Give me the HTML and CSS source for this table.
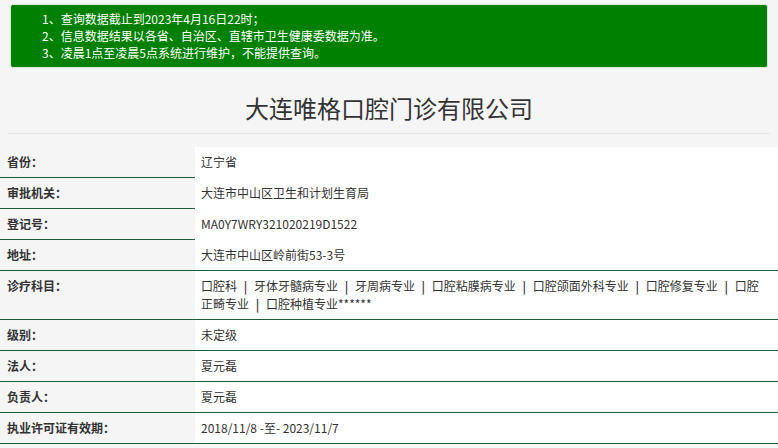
FILE: index.html
```html
<!DOCTYPE html>
<html lang="zh-CN">
<head>
<meta charset="utf-8">
<title>大连唯格口腔门诊有限公司</title>
<link rel="stylesheet" href="styles.css">
</head>
<body>
<div class="notice">
  <p>1、查询数据截止到2023年4月16日22时；</p>
  <p>2、信息数据结果以各省、自治区、直辖市卫生健康委数据为准。</p>
  <p>3、凌晨1点至凌晨5点系统进行维护，不能提供查询。</p>
</div>
<h1 class="title">大连唯格口腔门诊有限公司</h1>
<div class="info">
  <div class="row half"><div class="label">省份：</div><div class="value">辽宁省</div></div>
  <div class="row half"><div class="label">审批机关：</div><div class="value">大连市中山区卫生和计划生育局</div></div>
  <div class="row half"><div class="label">登记号：</div><div class="value">MA0Y7WRY321020219D1522</div></div>
  <div class="row"><div class="label">地址：</div><div class="value">大连市中山区岭前街53-3号</div></div>
  <div class="row"><div class="label">诊疗科目：</div><div class="value">口腔科 <span class="sep">|</span> 牙体牙髓病专业 <span class="sep">|</span> 牙周病专业 <span class="sep">|</span> 口腔粘膜病专业 <span class="sep">|</span> 口腔颌面外科专业 <span class="sep">|</span> 口腔修复专业 <span class="sep">|</span> 口腔正畸专业 <span class="sep">|</span> 口腔种植专业******</div></div>
  <div class="row"><div class="label">级别：</div><div class="value">未定级</div></div>
  <div class="row"><div class="label">法人：</div><div class="value">夏元磊</div></div>
  <div class="row"><div class="label">负责人：</div><div class="value">夏元磊</div></div>
  <div class="row"><div class="label">执业许可证有效期：</div><div class="value">2018/11/8 -至- 2023/11/7</div></div>
</div>
</body>
</html>
```

FILE: styles.css
```css
html, body {
  margin: 0;
  padding: 0;
  background: #f5f5f5;
  font-family: "Noto Sans CJK SC", "Microsoft YaHei", sans-serif;
  font-size: 12px;
  color: #333;
}

.notice {
  margin: 4px 10px 0 10px;
  background: #008000;
  border: 1px solid #d9e8d0;
  border-radius: 3px;
  padding: 5px 32px 6px 31px;
  color: #fff;
}

.notice p {
  margin: 0;
  line-height: 17px;
}

.title {
  margin: 23px 8px 0 8px;
  padding-bottom: 8px;
  border-bottom: 1px solid #e6e6e6;
  text-align: center;
  font-size: 24px;
  font-weight: normal;
  line-height: 34px;
  color: #333;
}

.info {
  margin-top: 13px;
}

.row {
  display: grid;
  grid-template-columns: 195px 1fr;
  border-bottom: 1px solid #1d5b36;
}

.row.half {
  border-bottom: none;
}

.row.half .label {
  border-bottom: 1px solid #1d5b36;
}

.label {
  padding: 6px 7px;
  line-height: 18px;
  font-weight: bold;
  background: #f5f5f5;
}

.value {
  padding: 6px 12px 6px 6px;
  line-height: 18px;
  background: #fff;
}

.sep {
  padding: 0 4px;
  color: #444;
  font-weight: bold;
}
```
